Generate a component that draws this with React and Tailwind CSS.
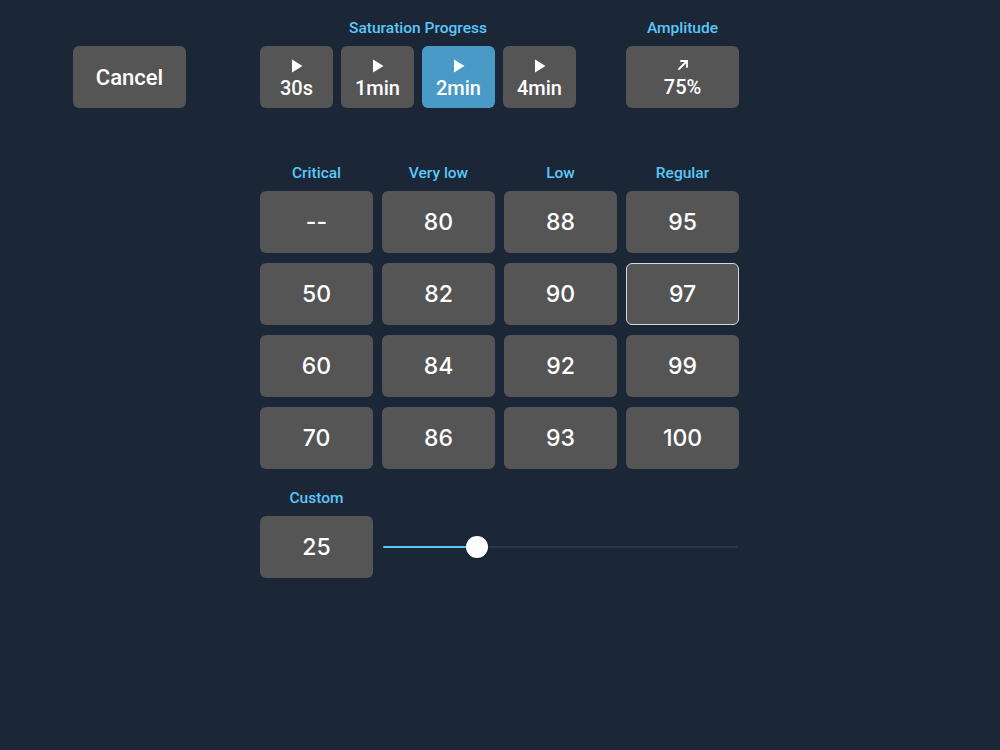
import React, { useState } from 'react';

const LABEL = 'text-[15.5px] font-medium text-[#5ac8fa] text-center leading-[20px]';
const sansFont = { fontFamily: '"Roboto", "Liberation Sans", sans-serif' };
const numFont = { fontFamily: '"Inter", "DejaVu Sans", sans-serif' };

const durations = ['30s', '1min', '2min', '4min'];

const columns = [
    { title: 'Critical', values: ['--', '50', '60', '70'] },
    { title: 'Very low', values: ['80', '82', '84', '86'] },
    { title: 'Low', values: ['88', '90', '92', '93'] },
    { title: 'Regular', values: ['95', '97', '99', '100'] },
];

const Play = () => (
    <svg width="12" height="14" viewBox="0 0 12 14" className="mx-auto">
        <path d="M1 0.5 L11.5 7 L1 13.5 Z" fill="white" />
    </svg>
);

const Arrow = () => (
    <svg width="12" height="12" viewBox="0 0 12 12" className="mx-auto" fill="none" stroke="white" strokeWidth="1.8" strokeLinecap="round" strokeLinejoin="round">
        <path d="M2 10 L10 2" />
        <path d="M4 2 H10 V8" />
    </svg>
);

const App = () => {
    const [duration, setDuration] = useState('2min');
    const [selected, setSelected] = useState('97');
    const custom = 25;

    return (
        <div className="w-[1000px] h-[750px] bg-[#1b2636] text-white pl-[73px] pt-[18px]" style={sansFont}>
            {/* top row */}
            <div className="flex items-end">
                <button className="w-[113px] h-[62px] rounded-[6px] bg-[#555555] text-[22px] font-medium text-white">
                    Cancel
                </button>

                <div className="ml-[74px] flex flex-col">
                    <div className={`${LABEL} mb-[8px]`}>Saturation Progress</div>
                    <div className="flex gap-[8px]">
                        {durations.map((d) => (
                            <button
                                key={d}
                                onClick={() => setDuration(d)}
                                className={`w-[73px] h-[62px] rounded-[6px] flex flex-col items-center justify-center gap-[4px] pt-[3px] ${
                                    duration === d ? 'bg-[#4a9ac7]' : 'bg-[#555555]'
                                }`}
                            >
                                <Play />
                                <span className="text-[20px] font-medium leading-[22px]">{d}</span>
                            </button>
                        ))}
                    </div>
                </div>

                <div className="ml-[50px] flex flex-col">
                    <div className={`${LABEL} mb-[8px]`}>Amplitude</div>
                    <button className="w-[113px] h-[62px] rounded-[6px] bg-[#555555] flex flex-col items-center justify-center gap-[5px] pt-[3px]">
                        <Arrow />
                        <span className="text-[20px] font-medium leading-[22px]">75%</span>
                    </button>
                </div>
            </div>

            {/* preset grid */}
            <div className="ml-[187px] mt-[55px] grid grid-cols-[113px_113px_113px_113px] gap-x-[9px]">
                {columns.map((col) => (
                    <div key={col.title} className="flex flex-col">
                        <div className={`${LABEL} mb-[8px]`}>{col.title}</div>
                        <div className="flex flex-col gap-[10px]">
                            {col.values.map((v) => (
                                <button
                                    key={v}
                                    onClick={() => setSelected(v)}
                                    className={`h-[62px] rounded-[6px] bg-[#555555] text-[23px] font-medium ${
                                        selected === v ? 'border border-[#d8d8d8]' : ''
                                    }`}
                                    style={numFont}
                                >
                                    {v}
                                </button>
                            ))}
                        </div>
                    </div>
                ))}
            </div>

            {/* custom */}
            <div className="ml-[187px] mt-[19px] flex flex-col">
                <div className={`${LABEL} w-[113px] mb-[8px]`}>Custom</div>
                <div className="flex items-center">
                    <button className="w-[113px] h-[62px] rounded-[6px] bg-[#555555] text-[23px] font-medium" style={numFont}>
                        {custom}
                    </button>
                    <div className="relative ml-[10px] w-[355px] h-[24px] flex items-center">
                        <div className="w-full h-[2px] bg-[#2c3747] rounded-full" />
                        <div className="absolute left-0 h-[2px] w-[94px] bg-[#5ac8fa] rounded-full" />
                        <div className="absolute left-[83px] w-[22px] h-[22px] rounded-full bg-white shadow" />
                    </div>
                </div>
            </div>
        </div>
    );
};

export default App;
